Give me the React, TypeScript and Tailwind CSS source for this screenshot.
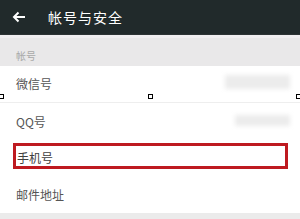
import React from "react";

const font = { fontFamily: '"Noto Sans CJK SC", "Noto Sans", sans-serif' };

function Handle({ cls }: { cls: string }) {
  return <div className={`absolute w-[5px] h-[5px] border border-black bg-white ${cls}`} />;
}

export default function App() {
  return (
    <div className="relative w-[300px] h-[219px] overflow-hidden bg-white" style={font}>
      <div className="h-[35px] bg-[#212a2b] flex items-center border-b border-[#2d3435]">
        <svg width="14" height="12" viewBox="0 0 14 12" className="ml-[12px]">
          <path d="M13 6H2M6.5 1.5L2 6l4.5 4.5" stroke="#ffffff" strokeWidth="2" fill="none" />
        </svg>
        <span className="ml-[22px] text-[14px] text-white tracking-[1px]">帐号与安全</span>
      </div>
      <div className="h-[31px] bg-[#e9e8e9] border-t-[3px] border-[#f0eef0] flex items-end pb-[3px] pl-[16px]">
        <span className="text-[10px] text-[#a8a8a8]">帐号</span>
      </div>
      <div className="flex flex-col">
        <div className="relative h-[37px] flex items-center pl-[16px] border-b border-[#eeeeee]">
          <span className="text-[12px] text-[#555555]">微信号</span>
          <div className="absolute right-[10px] top-[9px] w-[65px] h-[14px] bg-[#ececec] blur-[2px]" />
        </div>
        <div className="relative h-[37px] flex items-center pl-[16px]">
          <span className="text-[12px] text-[#555555]">QQ号</span>
          <div className="absolute right-[10px] top-[12px] w-[55px] h-[11px] bg-[#ececec] blur-[2px]" />
        </div>
        <div className="relative h-[36px] flex items-center pl-[17px]">
          <span className="text-[12px] text-[#404040]">手机号</span>
          <div className="absolute left-[13px] top-[3px] w-[275px] h-[26px] border-[3px] border-[#be1a20]" />
        </div>
        <div className="h-[37px] flex items-center pl-[16px]">
          <span className="text-[12px] text-[#555555]">邮件地址</span>
        </div>
      </div>
      <div className="h-[10px] bg-[#ebebeb]" />
      <Handle cls="left-[-1px] top-[94px]" />
      <Handle cls="left-[148px] top-[94px]" />
      <Handle cls="left-[296px] top-[94px]" />
    </div>
  );
}
